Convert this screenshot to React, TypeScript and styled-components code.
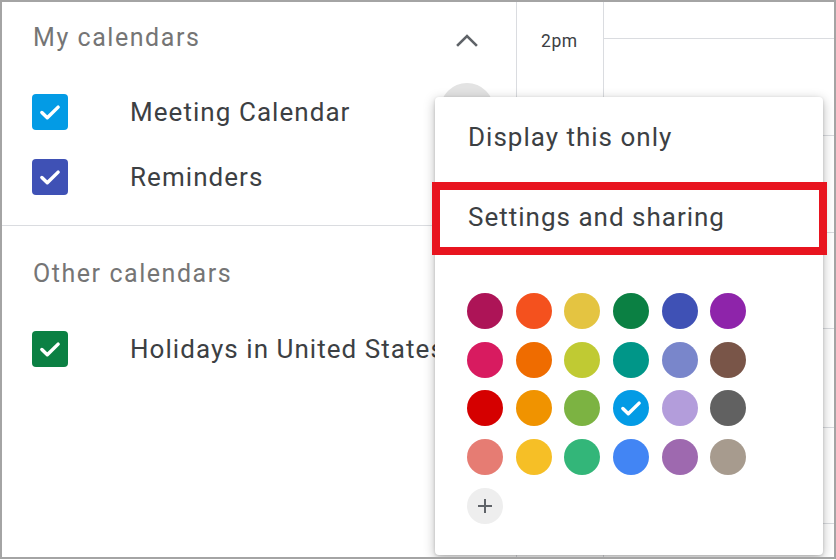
import React from "react";
import styled, { createGlobalStyle } from "styled-components";

const Global = createGlobalStyle`
  html, body { margin: 0; padding: 0; background: #ffffff; }
  body { font-family: Roboto, "Noto Sans", Arial, sans-serif; }
  * { box-sizing: border-box; }
`;

const Frame = styled.div`
  position: relative;
  width: 836px;
  height: 559px;
  border: 2px solid #a4a4a4;
  display: flex;
  overflow: hidden;
  background: #fff;
`;

const Sidebar = styled.div`
  width: 515px;
  flex: none;
  border-right: 1px solid #dadce0;
  display: flex;
  flex-direction: column;
`;

const Section = styled.div<{ $divider?: boolean }>`
  display: flex;
  flex-direction: column;
  padding-bottom: ${(p) => (p.$divider ? "16px" : "0")};
  border-bottom: ${(p) => (p.$divider ? "1px solid #dadce0" : "none")};
`;

const SectionHeader = styled.div<{ $top: number }>`
  display: flex;
  align-items: center;
  justify-content: space-between;
  padding: ${(p) => p.$top}px 25px 0 31px;
  height: ${(p) => p.$top + 32}px;
`;

const HeaderText = styled.div`
  font-size: 25px;
  line-height: 32px;
  color: #757575;
  letter-spacing: 1.55px;
`;

const IconButton = styled.div`
  width: 48px;
  height: 32px;
  display: flex;
  align-items: center;
  justify-content: center;
  margin-top: 4px;
`;

const List = styled.div<{ $top: number }>`
  display: flex;
  flex-direction: column;
  padding-top: ${(p) => p.$top}px;
`;

const Row = styled.div`
  height: 65px;
  display: flex;
  align-items: center;
  padding-left: 30px;
  position: relative;
`;

const Check = styled.div<{ $color: string }>`
  width: 36px;
  height: 36px;
  border-radius: 4px;
  background: ${(p) => p.$color};
  display: flex;
  align-items: center;
  justify-content: center;
  flex: none;
`;

const Label = styled.div`
  margin-left: 62px;
  font-size: 26px;
  letter-spacing: 1.05px;
  color: #3c4043;
  white-space: nowrap;
`;

const HoverCircle = styled.div`
  position: absolute;
  left: 438px;
  top: 4px;
  width: 54px;
  height: 54px;
  border-radius: 50%;
  background: #e3e3e3;
`;

const TimeColumn = styled.div`
  width: 87px;
  flex: none;
  border-right: 1px solid #dadce0;
  padding: 28px 0 0 24px;
`;

const TimeLabel = styled.div`
  font-size: 17.5px;
  line-height: 22px;
  color: #3c4043;
  letter-spacing: 0.6px;
`;

const Grid = styled.div`
  flex: 1;
  display: flex;
  flex-direction: column;
`;

const GridCell = styled.div<{ $h: number }>`
  height: ${(p) => p.$h}px;
  flex: none;
  border-bottom: 1px solid #dadce0;
`;

const Menu = styled.div`
  position: absolute;
  left: 433px;
  top: 95px;
  width: 388px;
  height: 458px;
  background: #fff;
  border-radius: 4px;
  box-shadow: 0 3px 12px rgba(0, 0, 0, 0.28), 0 1px 3px rgba(0, 0, 0, 0.15);
  display: flex;
  flex-direction: column;
`;

const MenuItem = styled.div`
  position: relative;
  height: 80px;
  display: flex;
  align-items: center;
  padding-left: 33px;
  font-size: 26px;
  letter-spacing: 1px;
  color: #3c4043;
`;

const Highlight = styled.div`
  position: absolute;
  left: -3px;
  right: -4px;
  top: 5px;
  bottom: 2px;
  border: 8px solid #e8141f;
  pointer-events: none;
`;

const Swatches = styled.div`
  display: grid;
  grid-template-columns: repeat(6, 36px);
  grid-auto-rows: 36px;
  column-gap: 12.7px;
  row-gap: 12.7px;
  padding: 36px 0 0 32px;
`;

const Swatch = styled.div<{ $color: string }>`
  width: 36px;
  height: 36px;
  border-radius: 50%;
  background: ${(p) => p.$color};
  display: flex;
  align-items: center;
  justify-content: center;
`;

const AddButton = styled.div`
  width: 36px;
  height: 36px;
  border-radius: 50%;
  background: #eeeeee;
  display: flex;
  align-items: center;
  justify-content: center;
`;

const CheckMark = ({ size = 26 }: { size?: number }) => (
  <svg width={size} height={size} viewBox="0 0 24 24">
    <path d="M4.5 12.5 L9.5 17.3 L19.5 7.5" fill="none" stroke="#fff" strokeWidth="3.2" strokeLinecap="round" strokeLinejoin="round" />
  </svg>
);

const Chevron = () => (
  <svg width="22" height="14" viewBox="0 0 22 14">
    <path d="M2 12 L11 3 L20 12" fill="none" stroke="#5f6368" strokeWidth="2.6" strokeLinecap="square" />
  </svg>
);

const Plus = () => (
  <svg width="18" height="18" viewBox="0 0 18 18">
    <path d="M9 2 V16 M2 9 H16" stroke="#5f6368" strokeWidth="2" />
  </svg>
);

const palette = [
  "#ad1457", "#f4511e", "#e4c441", "#0b8043", "#3f51b5", "#8e24aa",
  "#d81b60", "#ef6c00", "#c0ca33", "#009688", "#7986cb", "#795548",
  "#d50000", "#f09300", "#7cb342", "#039be5", "#b39ddb", "#616161",
  "#e67c73", "#f6bf26", "#33b679", "#4285f4", "#9e69af", "#a79b8e",
];

export default function App() {
  return (
    <>
      <Global />
      <Frame>
        <Sidebar>
          <Section $divider>
            <SectionHeader $top={20}>
              <HeaderText>My calendars</HeaderText>
              <IconButton>
                <Chevron />
              </IconButton>
            </SectionHeader>
            <List $top={25}>
              <Row>
                <Check $color="#039be5"><CheckMark /></Check>
                <Label>Meeting Calendar</Label>
                <HoverCircle />
              </Row>
              <Row>
                <Check $color="#3f51b5"><CheckMark /></Check>
                <Label>Reminders</Label>
              </Row>
            </List>
          </Section>
          <Section>
            <SectionHeader $top={32}>
              <HeaderText>Other calendars</HeaderText>
            </SectionHeader>
            <List $top={26}>
              <Row>
                <Check $color="#0b8043"><CheckMark /></Check>
                <Label>Holidays in United States</Label>
              </Row>
            </List>
          </Section>
        </Sidebar>
        <TimeColumn>
          <TimeLabel>2pm</TimeLabel>
        </TimeColumn>
        <Grid>
          <GridCell $h={37} />
          <GridCell $h={97} />
          <GridCell $h={97} />
          <GridCell $h={96} />
          <GridCell $h={99} />
          <GridCell $h={96} />
        </Grid>
        <Menu>
          <MenuItem>Display this only</MenuItem>
          <MenuItem>
            Settings and sharing
            <Highlight />
          </MenuItem>
          <Swatches>
            {palette.map((c) => (
              <Swatch key={c} $color={c}>
                {c === "#039be5" ? <CheckMark size={26} /> : null}
              </Swatch>
            ))}
            <AddButton>
              <Plus />
            </AddButton>
          </Swatches>
        </Menu>
      </Frame>
    </>
  );
}
